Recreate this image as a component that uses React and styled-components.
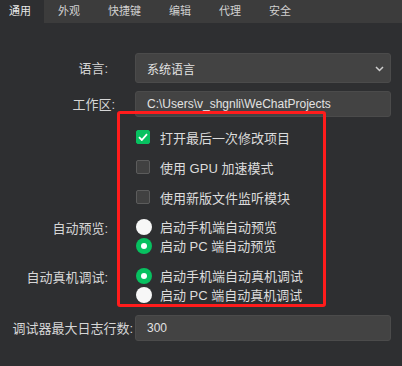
import { createGlobalStyle, styled } from 'styled-components';

const GlobalStyle = createGlobalStyle`
  html, body {
    margin: 0;
    padding: 0;
    background: #2e2f31;
  }
  body {
    font-family: "Liberation Sans", "Noto Sans CJK SC", sans-serif;
    color: #d8d8d8;
  }
`;

const Page = styled.div`
  position: relative;
  width: 402px;
  height: 366px;
  background: #2e2f31;
  overflow: hidden;
`;

const TabBar = styled.div`
  display: flex;
  height: 23px;
  background: #3c3c3c;
`;

const Tab = styled.div`
  display: flex;
  align-items: center;
  padding: ${(props) => (props.$active ? '0 13px 0 9px' : '0 14px')};
  font-size: 11px;
  line-height: 23px;
  color: ${(props) => (props.$active ? '#e8e8e8' : '#d0d0d0')};
  background: ${(props) => (props.$active ? '#2e2f31' : 'transparent')};
`;

const Form = styled.div`
  display: flex;
  flex-direction: column;
  padding-top: 30px;
`;

const FieldRow = styled.div`
  display: grid;
  grid-template-columns: 135px 256px;
  align-items: ${(props) => (props.$top ? 'start' : 'center')};
  margin-top: ${(props) => props.$gap || 0}px;
`;

const Label = styled.div`
  text-align: right;
  white-space: nowrap;
  font-size: 13px;
  line-height: 19px;
  color: #d6d6d6;
  padding-right: ${(props) => (props.$pr !== undefined ? props.$pr : 27)}px;
  padding-top: ${(props) => props.$pt || 0}px;
`;

const Box = styled.div`
  position: relative;
  display: flex;
  align-items: center;
  box-sizing: border-box;
  height: ${(props) => props.$h}px;
  padding-left: 11px;
  background: #434343;
  border: 1px solid #4b4b4b;
  border-radius: 3px;
  font-size: 12px;
  color: #e2e2e2;
`;

const Chevron = styled.svg`
  position: absolute;
  right: 6px;
  top: 12px;
`;

const Options = styled.div`
  display: flex;
  flex-direction: column;
  padding-left: 1px;
`;

const Option = styled.div`
  display: flex;
  align-items: center;
  height: ${(props) => props.$h}px;
  gap: ${(props) => props.$g}px;
  font-size: 13px;
  color: #dcdcdc;
  white-space: nowrap;
`;

const Check = styled.span`
  display: flex;
  align-items: center;
  justify-content: center;
  box-sizing: border-box;
  width: 14px;
  height: 14px;
  border-radius: 2px;
  background: ${(props) => (props.$on ? '#07c160' : '#414141')};
  border: 1px solid ${(props) => (props.$on ? '#07c160' : '#5c5c5c')};
`;

const Radio = styled.span`
  display: flex;
  align-items: center;
  justify-content: center;
  width: 16px;
  height: 16px;
  border-radius: 50%;
  background: ${(props) => (props.$on ? '#07c160' : '#f7f7f7')};
  &::after {
    content: '';
    display: ${(props) => (props.$on ? 'block' : 'none')};
    width: 6px;
    height: 6px;
    border-radius: 50%;
    background: #fff;
  }
`;

const Highlight = styled.div`
  position: absolute;
  left: 117px;
  top: 111px;
  width: 209px;
  height: 196px;
  box-sizing: border-box;
  border: 3px solid #ff1c1c;
  border-radius: 3px;
  pointer-events: none;
`;

const tabs = ['通用', '外观', '快捷键', '编辑', '代理', '安全'];

const CheckOption = ({ on, children }) => (
  <Option $h={30} $g={10}>
    <Check $on={on}>
      {on && (
        <svg width="10" height="8" viewBox="0 0 10 8">
          <path d="M1 4.2 L3.8 7 L9 1.2" fill="none" stroke="#fff" strokeWidth="1.8" />
        </svg>
      )}
    </Check>
    {children}
  </Option>
);

const RadioOption = ({ on, children }) => (
  <Option $h={19} $g={8}>
    <Radio $on={on} />
    {children}
  </Option>
);

export default function App() {
  return (
    <Page>
      <GlobalStyle />
      <TabBar>
        {tabs.map((t, i) => (
          <Tab key={t} $active={i === 0}>
            {t}
          </Tab>
        ))}
      </TabBar>
      <Form>
        <FieldRow>
          <Label>语言:</Label>
          <Box $h={30}>
            系统语言
            <Chevron width="9" height="6" viewBox="0 0 9 6">
              <path d="M1 1 L4.5 4.5 L8 1" fill="none" stroke="#cfcfcf" strokeWidth="1.5" />
            </Chevron>
          </Box>
        </FieldRow>
        <FieldRow $gap={8}>
          <Label $pr={20}>工作区:</Label>
          <Box $h={26}>C:\Users\v_shgnli\WeChatProjects</Box>
        </FieldRow>
        <FieldRow $gap={5}>
          <div />
          <Options>
            <CheckOption on>打开最后一次修改项目</CheckOption>
            <CheckOption>使用 GPU 加速模式</CheckOption>
            <CheckOption>使用新版文件监听模块</CheckOption>
          </Options>
        </FieldRow>
        <FieldRow $gap={5} $top>
          <Label $pt={2}>自动预览:</Label>
          <Options>
            <RadioOption>启动手机端自动预览</RadioOption>
            <RadioOption on>启动 PC 端自动预览</RadioOption>
          </Options>
        </FieldRow>
        <FieldRow $gap={11} $top>
          <Label $pt={2}>自动真机调试:</Label>
          <Options>
            <RadioOption on>启动手机端自动真机调试</RadioOption>
            <RadioOption>启动 PC 端自动真机调试</RadioOption>
          </Options>
        </FieldRow>
        <FieldRow $gap={11}>
          <Label $pr={2}>调试器最大日志行数:</Label>
          <Box $h={26}>300</Box>
        </FieldRow>
      </Form>
      <Highlight />
    </Page>
  );
}
